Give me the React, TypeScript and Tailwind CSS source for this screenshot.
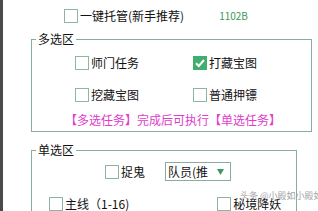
import React from 'react';

const font = { fontFamily: '"Noto Sans CJK SC", "Liberation Sans", sans-serif' };

function Box({ checked = false }: { checked?: boolean }) {
  if (checked) {
    return (
      <span className="flex h-[14px] w-[14px] shrink-0 items-center justify-center bg-[#3fae6e]">
        <svg width="12" height="12" viewBox="0 0 12 12">
          <path d="M2 6.2 L4.8 9 L10 3" fill="none" stroke="#fff" strokeWidth="2" />
        </svg>
      </span>
    );
  }
  return <span className="block h-[14px] w-[14px] shrink-0 border border-[#8fb5a6] bg-white" />;
}

function Check({ label, checked }: { label: string; checked?: boolean }) {
  return (
    <div className="flex items-center gap-[2px] text-[12px] leading-[14px] text-[#111]">
      <Box checked={checked} />
      <span className="whitespace-nowrap">{label}</span>
    </div>
  );
}

export default function App() {
  return (
    <div className="flex h-[211px] w-[318px] overflow-hidden bg-white" style={font}>
      <div className="w-[3px] shrink-0 bg-[#4a4a4a]" />
      <div className="relative flex-1">
        {/* top row */}
        <div className="flex items-center pl-[61px] pt-[8px]">
          <Check label="一键托管(新手推荐)" />
          <span className="ml-[35px] text-[10px] text-[#3c9a5c]">1102B</span>
        </div>

        {/* 多选区 */}
        <fieldset className="ml-[28px] mt-[9px] h-[100px] w-[264px] border border-[#86ad9e]">
          <legend className="ml-[4px] px-[2px] text-[12px] leading-[14px] text-[#111]">多选区</legend>
          <div className="mt-[10px] grid grid-cols-[118px_118px] gap-y-[18px] pl-[43px]">
            <Check label="师门任务" />
            <Check label="打藏宝图" checked />
            <Check label="挖藏宝图" />
            <Check label="普通押镖" />
          </div>
          <div className="mt-[11px] pl-[33px] text-[12px] leading-[14px] text-[#e03ccc]">
            【多选任务】完成后可执行【单选任务】
          </div>
        </fieldset>

        {/* 单选区 */}
        <fieldset className="ml-[28px] mt-[11px] h-[80px] w-[266px] border border-[#86ad9e]">
          <legend className="ml-[4px] px-[2px] text-[12px] leading-[14px] text-[#111]">单选区</legend>
          <div className="mt-[5px] flex items-center pl-[73px]">
            <Check label="捉鬼" />
            <div className="ml-[20px] flex h-[19px] w-[66px] items-center border border-[#86ad9e] pl-[2px] text-[12px] text-[#111]">
              <span className="flex-1 overflow-hidden whitespace-nowrap">队员(推</span>
              <svg width="7" height="6" viewBox="0 0 7 6" className="mr-[6px]">
                <path d="M0 0 H7 L3.5 6 Z" fill="#3c9a5c" />
              </svg>
            </div>
          </div>
          <div className="mt-[16px] flex items-center pl-[17px]">
            <Check label="主线（1-16)" />
            <div className="ml-[88px]">
              <Check label="秘境降妖" />
            </div>
          </div>
        </fieldset>

        <div className="absolute left-[237px] top-[190px] whitespace-nowrap text-[9px] leading-[11px] text-[#9a9a9a] opacity-90">
          头条 @小殿如小殿如
        </div>
      </div>
    </div>
  );
}
